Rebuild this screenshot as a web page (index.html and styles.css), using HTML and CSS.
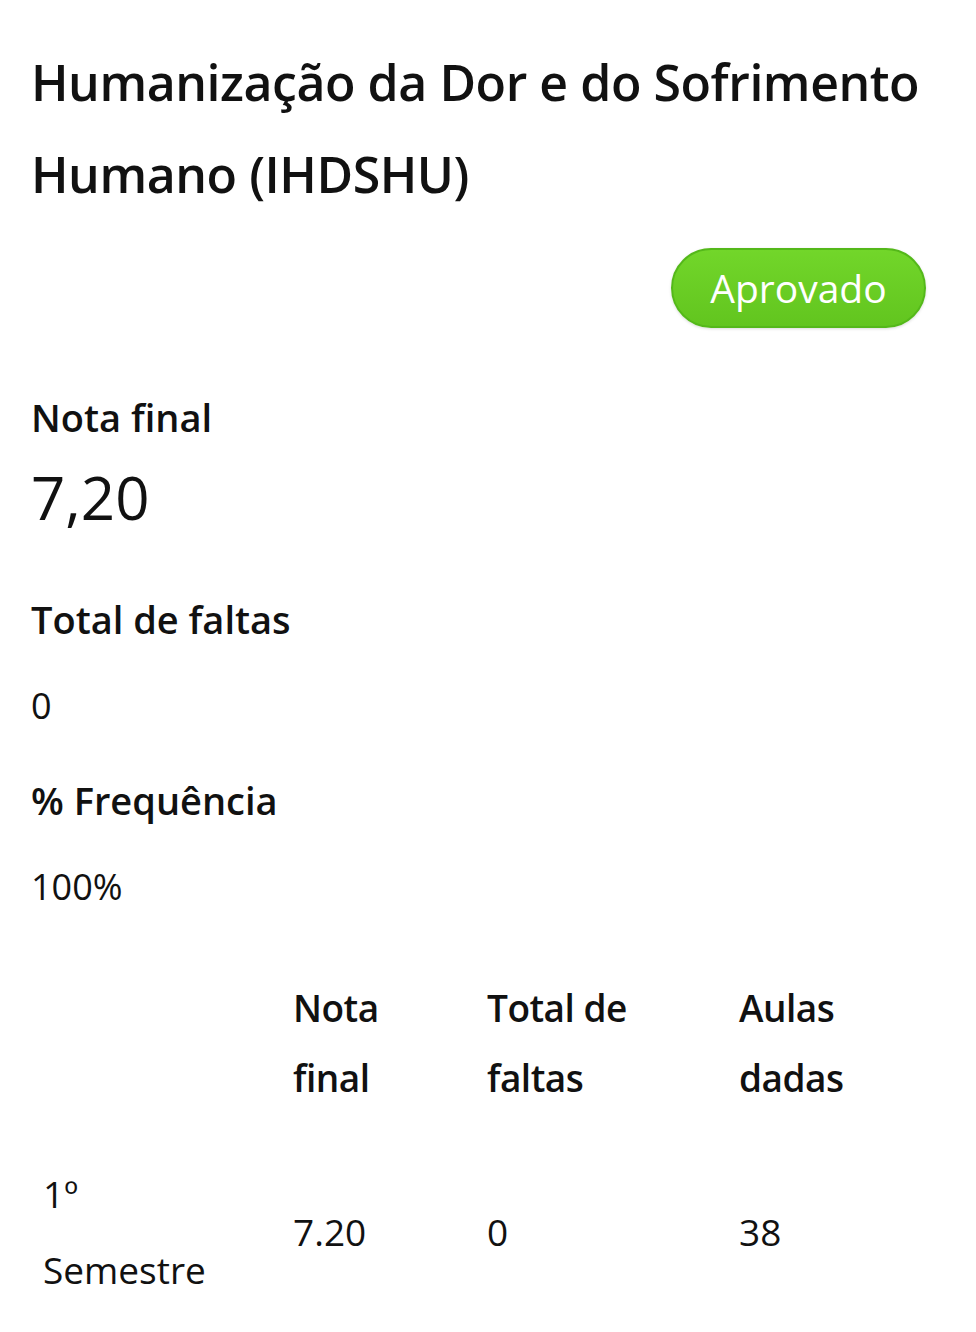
FILE: index.html
```html
<!DOCTYPE html>
<html lang="pt-BR">
<head>
  <meta charset="UTF-8" />
  <meta name="viewport" content="width=device-width, initial-scale=1">
  <title>Humanização da Dor e do Sofrimento Humano</title>
  <link rel="stylesheet" href="styles.css">
</head>
<body>
  <main class="disciplina">
    <h1 class="titulo">Humanização da Dor e do Sofrimento Humano (IHDSHU)</h1>

    <div class="status">
      <span class="badge">Aprovado</span>
    </div>

    <section class="info">
      <h2>Nota final</h2>
      <p class="nota">7,20</p>
    </section>

    <section class="info">
      <h2>Total de faltas</h2>
      <p>0</p>
    </section>

    <section class="info">
      <h2>% Frequência</h2>
      <p>100%</p>
    </section>

    <table class="semestres">
      <thead>
        <tr>
          <th class="col-sem"></th>
          <th class="col-nota">Nota final</th>
          <th class="col-faltas">Total de faltas</th>
          <th class="col-aulas">Aulas dadas</th>
        </tr>
      </thead>
      <tbody>
        <tr>
          <td>1º<br>Semestre</td>
          <td>7.20</td>
          <td>0</td>
          <td>38</td>
        </tr>
      </tbody>
    </table>
  </main>
</body>
</html>
```

FILE: styles.css
```css
body {
  margin: 0;
  font-family: 'Open Sans', 'Noto Sans', sans-serif;
  background: #fff;
  color: #111;
}

.disciplina {
  padding: 0 40px 0 31px;
}

.titulo {
  margin: 0;
  padding-top: 36px;
  font-size: 50px;
  line-height: 92px;
  font-weight: 600;
  letter-spacing: -0.45px;
}

.status {
  display: flex;
  justify-content: flex-end;
  margin: 28px 10px 0 0;
}

.badge {
  display: inline-block;
  width: 251px;
  height: 76px;
  line-height: 76px;
  text-align: center;
  border-radius: 40px;
  border: 2px solid #54b81a;
  background: linear-gradient(#72d62a, #62c51f);
  color: #fff;
  font-size: 39px;
  font-weight: 500;
  box-shadow: 0 1px 3px rgba(0,0,0,0.15);
}

.info h2 {
  margin: 0;
  font-size: 38px;
  font-weight: 600;
  line-height: 50px;
}

.info p {
  margin: 0;
  font-size: 36px;
  line-height: 50px;
}

.info:first-of-type { margin-top: 64px; }

.info + .info { margin-top: 44px; }

.info h2 + p { margin-top: 37px; }

.info .nota {
  font-size: 60px;
  line-height: 70px;
  margin: 20px 0 62px;
}

.semestres {
  margin-top: 61px;
  border-collapse: collapse;
  width: 100%;
  font-size: 37px;
}

.semestres th,
.semestres td {
  text-align: left;
  padding: 0 12px;
  vertical-align: middle;
}

.semestres th {
  font-weight: 600;
  line-height: 70px;
  padding-bottom: 43px;
  letter-spacing: -0.5px;
}

.semestres td {
  line-height: 76px;
  font-weight: 400;
}

.col-sem { width: 226px; }
.semestres .col-nota { width: 150px; padding-right: 32px; }
.col-faltas { width: 228px; }
```
